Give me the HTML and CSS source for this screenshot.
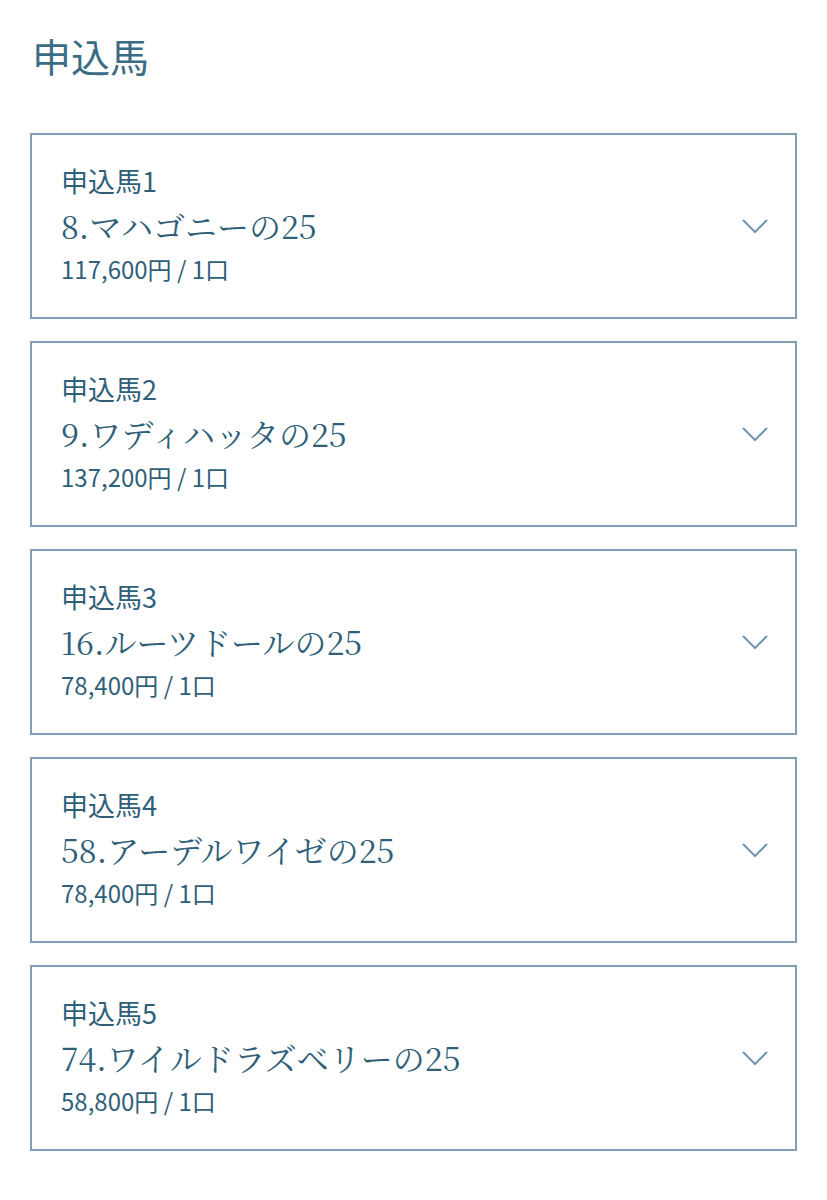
FILE: index.html
```html
<!DOCTYPE html>
<html lang="ja">
<head>
    <meta charset="UTF-8">
    <title>申込馬</title>
    <link rel="stylesheet" href="styles.css">
</head>
<body>
    <div class="entry-container">
        <h1 class="entry-title">申込馬</h1>

        <div class="horse-list">
            <!-- 申込馬1 -->
            <div class="horse-card">
                <div class="horse-info">
                    <div class="horse-label">申込馬1</div>
                    <div class="horse-name">8.マハゴニーの25</div>
                    <div class="horse-price">117,600円 / 1口</div>
                </div>
                <svg class="chevron" width="28" height="18" viewBox="0 0 28 18"><polyline points="2,3 14,15 26,3" fill="none" stroke="currentColor" stroke-width="2"/></svg>
            </div>

            <!-- 申込馬2 -->
            <div class="horse-card">
                <div class="horse-info">
                    <div class="horse-label">申込馬2</div>
                    <div class="horse-name">9.ワディハッタの25</div>
                    <div class="horse-price">137,200円 / 1口</div>
                </div>
                <svg class="chevron" width="28" height="18" viewBox="0 0 28 18"><polyline points="2,3 14,15 26,3" fill="none" stroke="currentColor" stroke-width="2"/></svg>
            </div>

            <!-- 申込馬3 -->
            <div class="horse-card">
                <div class="horse-info">
                    <div class="horse-label">申込馬3</div>
                    <div class="horse-name">16.ルーツドールの25</div>
                    <div class="horse-price">78,400円 / 1口</div>
                </div>
                <svg class="chevron" width="28" height="18" viewBox="0 0 28 18"><polyline points="2,3 14,15 26,3" fill="none" stroke="currentColor" stroke-width="2"/></svg>
            </div>

            <!-- 申込馬4 -->
            <div class="horse-card">
                <div class="horse-info">
                    <div class="horse-label">申込馬4</div>
                    <div class="horse-name">58.アーデルワイゼの25</div>
                    <div class="horse-price">78,400円 / 1口</div>
                </div>
                <svg class="chevron" width="28" height="18" viewBox="0 0 28 18"><polyline points="2,3 14,15 26,3" fill="none" stroke="currentColor" stroke-width="2"/></svg>
            </div>

            <!-- 申込馬5 -->
            <div class="horse-card">
                <div class="horse-info">
                    <div class="horse-label">申込馬5</div>
                    <div class="horse-name">74.ワイルドラズベリーの25</div>
                    <div class="horse-price">58,800円 / 1口</div>
                </div>
                <svg class="chevron" width="28" height="18" viewBox="0 0 28 18"><polyline points="2,3 14,15 26,3" fill="none" stroke="currentColor" stroke-width="2"/></svg>
            </div>
        </div>
    </div>
</body>
</html>
```

FILE: styles.css
```css
:root {
    --text-color: #2f5f79;
    --title-color: #3b6c86;
    --border-color: #7fa0b5;
    --chevron-color: #7197ad;
}

* {
    box-sizing: border-box;
    margin: 0;
    padding: 0;
}

body {
    font-family: "Noto Sans CJK JP", "Noto Sans", sans-serif;
    background-color: #fff;
    color: var(--text-color);
}

.entry-container {
    padding: 30px 30px 40px 30px;
}

.entry-title {
    font-size: 39px;
    font-weight: 400;
    line-height: 50px;
    color: var(--title-color);
    padding-left: 2px;
    margin-bottom: 53px;
}

.horse-list {
    display: flex;
    flex-direction: column;
    gap: 22px;
}

.horse-card {
    border: 2px solid var(--border-color);
    height: 186px;
    padding: 0 26px 4px 29px;
    display: flex;
    justify-content: space-between;
    align-items: center;
}

.horse-info {
    display: flex;
    flex-direction: column;
}

.horse-label {
    font-size: 27px;
    font-weight: 400;
    line-height: 34px;
}

.horse-name {
    font-family: "Noto Serif CJK JP", "Liberation Serif", "Noto Sans CJK JP", serif;
    font-size: 32px;
    line-height: 44px;
    margin-top: 5px;
}

.horse-price {
    font-size: 24px;
    font-weight: 400;
    line-height: 32px;
    margin-top: 6px;
}

.chevron {
    color: var(--chevron-color);
    flex-shrink: 0;
    margin-top: 4px;
}
```
